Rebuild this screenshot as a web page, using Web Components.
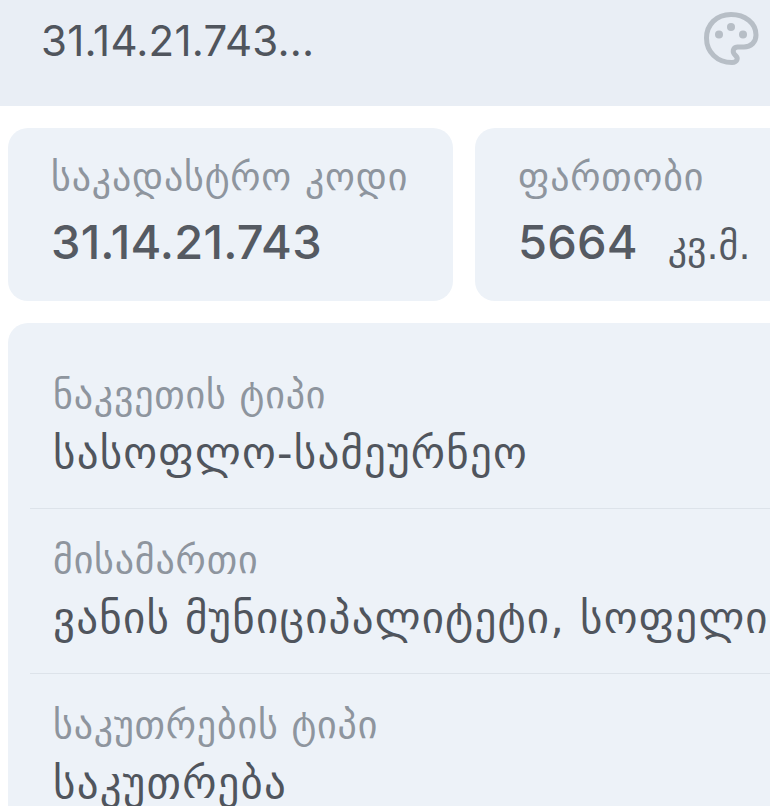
<!DOCTYPE html>
<html><head><meta charset="utf-8">
<style>
html,body{margin:0;padding:0;background:#fff;width:770px;height:806px;overflow:hidden;font-family:"DejaVu Sans","Noto Sans",sans-serif;}
</style></head><body>
<parcel-page></parcel-page>
<script>
(() => {
  const FONT = '"Inter","Liberation Sans",sans-serif';
  class TopBar extends HTMLElement {
    constructor() {
      super();
      this.attachShadow({ mode: 'open' }).innerHTML = `
        <style>
          :host { display:flex; align-items:center; justify-content:space-between; height:106px; box-sizing:border-box; padding:0 6px 26px 41px; background:#e9eef5; color:#50555d; font:400 42px ${FONT}; letter-spacing:.2px; }
          svg { width:64px; height:64px; }
        </style>
        <slot></slot>
        <svg viewBox="700 8 64 64">
          <path d="M731 14.500C716 14.500 706.500 25 706.500 38C706.500 52 717 62.500 732 62.500C737.500 62.500 738.500 58 735.500 55.500C732 52.500 732.500 47.500 737.500 47L744 47C751 47 756 42 756 35C756 23 745 14.500 731 14.500Z" fill="none" stroke="#b7bec6" stroke-width="5"/>
          <circle cx="719" cy="34.500" r="4" fill="#b7bec6"/>
          <circle cx="731" cy="27" r="4" fill="#b7bec6"/>
          <circle cx="743" cy="34.500" r="4" fill="#b7bec6"/>
        </svg>`;
    }
  }
  class StatCard extends HTMLElement {
    constructor() {
      super();
      this.attachShadow({ mode: 'open' }).innerHTML = `
        <style>
          :host { display:block; box-sizing:border-box; height:173px; background:#edf2f8; border-radius:20px; padding:28px 0 0 43px; white-space:nowrap; overflow:hidden; }
          .label { font-size:38px; letter-spacing:.8px; line-height:42px; color:#8e959e; }
          .value { margin-top:15px; font:450 47px/58px ${FONT}; letter-spacing:.2px; color:#555a62; }
        </style>
        <div class="label"><slot name="label"></slot></div>
        <div class="value"><slot></slot></div>`;
    }
  }
  class InfoRow extends HTMLElement {
    constructor() {
      super();
      this.attachShadow({ mode: 'open' }).innerHTML = `
        <style>
          :host { display:block; box-sizing:border-box; height:165px; padding:31px 0 0 23px; white-space:nowrap; border-bottom:1px solid #dde3ea; }
          :host(:last-child) { border-bottom:0; }
          .label { font-size:38px; letter-spacing:.8px; line-height:40px; color:#8e959e; }
          .value { margin-top:15px; font-size:43px; letter-spacing:1.2px; line-height:46px; color:#50555d; }
        </style>
        <div class="label"><slot name="label"></slot></div>
        <div class="value"><slot></slot></div>`;
    }
  }
  class ParcelPage extends HTMLElement {
    constructor() {
      super();
      this.attachShadow({ mode: 'open' }).innerHTML = `
        <style>
          :host { display:block; }
          main { padding:22px 0 0 8px; display:flex; flex-direction:column; gap:22px; }
          .stats { display:grid; grid-template-columns:445px 320px; gap:22px; }
          .list { background:#edf2f8; border-radius:20px 0 0 0; padding:21px 0 0 22px; height:500px; box-sizing:border-box; overflow:hidden; }
          .unit { font:400 38px "DejaVu Sans",sans-serif; margin-left:17px; letter-spacing:0; }
        </style>
        <top-bar>31.14.21.743...</top-bar>
        <main>
          <div class="stats">
            <stat-card><span slot="label">საკადასტრო კოდი</span>31.14.21.743</stat-card>
            <stat-card><span slot="label">ფართობი</span>5664 <span class="unit">კვ.მ.</span></stat-card>
          </div>
          <div class="list">
            <info-row><span slot="label">ნაკვეთის ტიპი</span>სასოფლო-სამეურნეო</info-row>
            <info-row><span slot="label">მისამართი</span>ვანის მუნიციპალიტეტი, სოფელი</info-row>
            <info-row><span slot="label">საკუთრების ტიპი</span>საკუთრება</info-row>
          </div>
        </main>`;
    }
  }
  customElements.define('top-bar', TopBar);
  customElements.define('stat-card', StatCard);
  customElements.define('info-row', InfoRow);
  customElements.define('parcel-page', ParcelPage);
})();
</script>
</body></html>
